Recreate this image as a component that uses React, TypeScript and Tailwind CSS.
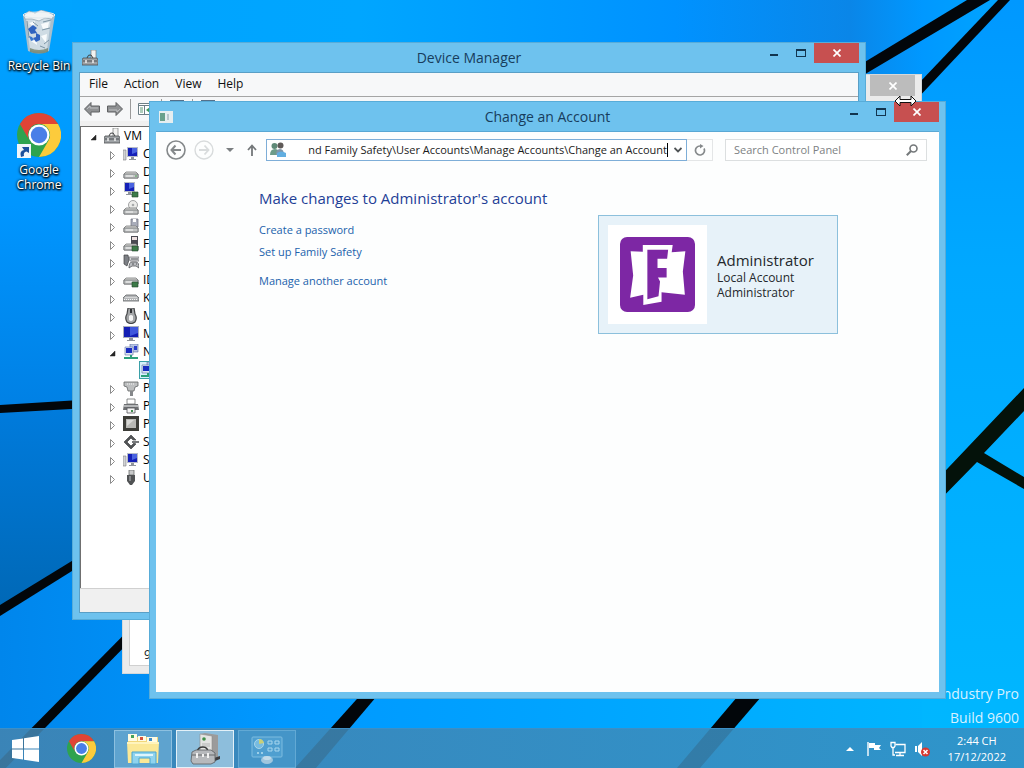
import { useState, type ReactNode } from "react";

/* ---------- wallpaper ---------- */

function Wallpaper() {
  return (
    <svg
      className="absolute inset-0 h-full w-full"
      viewBox="0 0 1024 768"
      preserveAspectRatio="xMidYMid slice"
      aria-hidden="true"
    >
      <defs>
        <linearGradient id="sky" x1="0" y1="0" x2="1" y2="0">
          <stop offset="0" stopColor="#00a2ff" />
          <stop offset="0.35" stopColor="#00a6ff" />
          <stop offset="0.66" stopColor="#0092ff" />
          <stop offset="0.83" stopColor="#0a86e8" />
          <stop offset="0.9" stopColor="#0098ff" />
          <stop offset="1" stopColor="#00a8ff" />
        </linearGradient>
        <linearGradient id="left" x1="0" y1="0" x2="0" y2="1">
          <stop offset="0" stopColor="#00a4ff" />
          <stop offset="0.5" stopColor="#0096ff" />
          <stop offset="1" stopColor="#0080e4" />
        </linearGradient>
        <linearGradient id="deep" x1="0" y1="0" x2="0" y2="1">
          <stop offset="0" stopColor="#007cde" />
          <stop offset="1" stopColor="#0068b6" />
        </linearGradient>
        <linearGradient id="floor" x1="0" y1="0" x2="1" y2="0">
          <stop offset="0" stopColor="#0086ec" />
          <stop offset="0.3" stopColor="#0098ff" />
          <stop offset="0.6" stopColor="#00a4ff" />
          <stop offset="1" stopColor="#00b6ff" />
        </linearGradient>
        <linearGradient id="right" x1="0" y1="0" x2="0" y2="1">
          <stop offset="0" stopColor="#0098ff" />
          <stop offset="0.35" stopColor="#00a8ff" />
          <stop offset="1" stopColor="#00b8ff" />
        </linearGradient>
      </defs>
      <path d="M0 0H1024V768H0Z" fill="url(#sky)" />
      <path d="M0 0H72V405L0 409Z" fill="url(#left)" />
      <path d="M0 409L160 400V512L0 610Z" fill="url(#deep)" />
      <path d="M0 610L160 512V480H945V768H0Z" fill="url(#floor)" />
      <path d="M922 88L1008 0H1024V768H922Z" fill="url(#right)" />
      <g fill="#02060a">
        <path d="M0 405L160 395V404L0 413Z" />
        <path d="M0 605L160 507V516L0 616Z" />
        <path d="M0 760L180 578V590L0 774Z" />
        <path d="M365 690L295 768H316L382 690Z" />
        <path d="M743 690L677 768H700L767 690Z" />
        <path d="M840 77L967 0H990L840 89Z" />
        <path d="M900 103L998 0H1010L900 117Z" />
      </g>
      <path d="M930 487L1024 388V411L984 453L1024 477V489L977 462L930 510Z" fill="#04120a" />
    </svg>
  );
}

/* ---------- large icons ---------- */

function ChromeLogo({ className }: { className: string }) {
  return (
    <svg className={className} viewBox="0 0 48 48" aria-hidden="true">
      <circle cx="24" cy="24" r="24" fill="#2ea34f" />
      <path d="M24 0A24 24 0 0 1 44.8 12H24A12 12 0 0 0 13.6 30L3.2 12A24 24 0 0 1 24 0Z" fill="#e04436" />
      <path d="M44.8 12A24 24 0 0 1 24 48L34.4 30A12 12 0 0 0 24 12Z" fill="#fccb3c" />
      <circle cx="24" cy="24" r="11.5" fill="#fff" />
      <circle cx="24" cy="24" r="9" fill="#4a7fe8" />
    </svg>
  );
}

function RecycleBinIcon() {
  return (
    <svg className="h-11 w-9" viewBox="0 0 36 44" aria-hidden="true">
      <path d="M2 5L7 41Q18 46 28 41L34 5Z" fill="#a9bfce" />
      <path d="M5 8L9 40Q18 43 26 40L30 8Z" fill="#cfdce4" />
      <path d="M3 5L8 1L14 3L20 0L27 2L33 5L31 9L24 8L18 11L11 9L4 9Z" fill="#f0f4f6" stroke="#8fa3b1" strokeWidth="0.7" />
      <path d="M8 13L14 11L13 17ZM20 14L28 12L27 18L22 19ZM10 31L15 27L16 35ZM20 26L26 24L25 33Z" fill="#f8fbfc" />
      <path d="M22 12L30 10M21 20L29 18M23 34L28 30M6 11L8 28M12 12L17 16M19 36L24 38" stroke="#7d96a6" fill="none" />
      <path d="M7 19L12 15L16 18L14 20L16 23L10 24Z" fill="#2f63c0" />
      <path d="M15 23L19 25L19 30L15 32L12 28L15 27Z" fill="#2f63c0" />
      <path d="M8 26L11 27L13 30L10 31Z" fill="#3a78cf" />
      <path d="M9 38Q18 42 27 38V42Q18 45 9 42Z" fill="#6c7d66" opacity="0.75" />
      <ellipse cx="18" cy="5" rx="16" ry="3" fill="none" stroke="#dfe9ef" />
    </svg>
  );
}

function FolderIcon() {
  return (
    <svg className="h-8 w-9" viewBox="0 0 36 32" aria-hidden="true">
      <path d="M3 4H33V30H3Z" fill="#f1d77a" />
      <path d="M3 1H12V8H3Z" fill="#fffbe4" />
      <path d="M6 2H9V5H6Z" fill="#46a35a" />
      <path d="M13 3H21V8H13Z" fill="#fffbe4" />
      <path d="M15 4H18V7H15Z" fill="#d5513c" />
      <path d="M22 4H32V9H22Z" fill="#fffbe4" />
      <path d="M24 5H27V8H24Z" fill="#3f8bc9" />
      <path d="M2 9H34L33 30H3Z" fill="#fbe896" />
      <path d="M2 9H34V11H2Z" fill="#fff4bd" />
      <path d="M7 19H31V31H25V25H14V31H7Z" fill="#8fd3ee" stroke="#4aa5d0" />
      <path d="M10 21H28V23H10Z" fill="#def5fd" />
    </svg>
  );
}

function DeviceToolboxIcon() {
  return (
    <svg className="h-8 w-8" viewBox="0 0 32 32" aria-hidden="true">
      <path d="M11 1L16 0L29 2V25L24 27L11 24Z" fill="#9b9b9b" />
      <path d="M11 1L23 3V26L11 24Z" fill="#e4e4e2" stroke="#8e8e8e" strokeWidth="0.6" />
      <circle cx="15" cy="6" r="1.8" fill="#3e8f48" />
      <path d="M13 11H21M13 13H21" stroke="#b5b5b5" />
      <path d="M25 25L31 23V26L26 28Z" fill="#3c3c40" />
      <path d="M8 19Q9 14 14 14T19 20" fill="none" stroke="#3a3a3a" strokeWidth="1.6" />
      <path d="M3 19L7 17H22L26 20V29L22 31H4L2 28Z" fill="#b7b9bc" stroke="#5b5d60" strokeWidth="0.8" />
      <path d="M3 22H26" stroke="#66686b" />
      <path d="M8 20V25M19 20V25M14 21V24" stroke="#f2f2f2" strokeWidth="2" />
    </svg>
  );
}

function ControlPanelIcon() {
  return (
    <svg className="h-8 w-8" viewBox="0 0 32 32" aria-hidden="true">
      <rect x="1" y="4" width="30" height="20" rx="1" fill="#4f9fd0" stroke="#7dbce0" />
      <circle cx="8" cy="11" r="4.5" fill="#77bbe0" stroke="#a8d6ec" />
      <path d="M8 11V6A5 5 0 0 1 13 10Z" fill="#c9cf78" />
      <path d="M17 8H21V11H17ZM24 8H28V11H24ZM17 15H21V18H17ZM24 15H28V18H24Z" fill="none" stroke="#a8d6ee" />
      <path d="M6 20H8M10 20H12" stroke="#9ccfe8" strokeWidth="2" />
      <ellipse cx="16" cy="27" rx="6" ry="4" fill="#9fc6de" />
      <ellipse cx="16" cy="25" rx="4" ry="2" fill="#c2dbea" />
    </svg>
  );
}

/* ---------- device tree icons, drawn on a 16 by 16 grid ---------- */

const screen = (
  <>
    <path d="M4 1H15V11H4Z" fill="#b8bcc8" />
    <path d="M5 2H14V10H5Z" fill="#1520b8" />
    <path d="M9 2H14V6L9 8Z" fill="#4a63e0" />
    <path d="M8 11H11V13H13V14H6V13H8Z" fill="#8f949c" />
  </>
);

const drive = (
  <>
    <path d="M3 8H13L15 10V14H1V10Z" fill="#dcdcda" stroke="#77797a" strokeWidth="0.8" />
    <path d="M1 10H15V14H1Z" fill="#c4c6c6" stroke="#6b6d6e" strokeWidth="0.8" />
    <path d="M3 12H10" stroke="#f4f4f4" />
  </>
);

const chip = <path d="M9 10H15V15H9Z" fill="#3c7a48" stroke="#24472b" strokeWidth="0.6" />;

const deviceGlyphs: Record<string, ReactNode> = {
  computer: (
    <>
      <path d="M0 4H3V14H0Z" fill="#d0d2d4" stroke="#7c7e80" strokeWidth="0.6" />
      {screen}
    </>
  ),
  disk: (
    <>
      {drive}
      <path d="M12 12H14" stroke="#4aa04f" />
    </>
  ),
  display: (
    <>
      <g transform="translate(-3 -1)">{screen}</g>
      {chip}
    </>
  ),
  dvd: (
    <>
      <circle cx="10" cy="5" r="4.5" fill="#ececea" stroke="#8b8d8e" strokeWidth="0.8" />
      <circle cx="10" cy="5" r="1.3" fill="#a8aaab" />
      {drive}
    </>
  ),
  floppy: (
    <>
      <path d="M8 1H15V9H8Z" fill="#a9adba" stroke="#6a6d78" strokeWidth="0.7" />
      <path d="M10 1H13V4H10Z" fill="#fff" />
      {drive}
    </>
  ),
  floppyController: (
    <>
      <path d="M8 0H15V9H8Z" fill="#4a4a52" />
      <path d="M9 1H14V4H9Z" fill="#eee1e1" />
      {drive}
      {chip}
    </>
  ),
  hid: (
    <>
      <path d="M1 1H5L6 6L4 12L1 10Z" fill="#7d8085" stroke="#3f4144" strokeWidth="0.7" />
      <path d="M6 3H16V7H7Z" fill="#d7d8da" stroke="#6d6f72" strokeWidth="0.7" />
      <path d="M6 14Q6 8 9 8H13Q16 8 16 14L13 12H9Z" fill="#b9bbbf" stroke="#55575a" strokeWidth="0.8" />
      <path d="M8 5H15M9 10H11M13 10H14" stroke="#55575a" />
    </>
  ),
  ide: (
    <>
      <g transform="translate(0 -2)">{drive}</g>
      {chip}
    </>
  ),
  keyboard: (
    <>
      <path d="M3 5H13L16 8V11H0V8Z" fill="#b4b6b8" stroke="#606264" strokeWidth="0.8" />
      <path d="M2.500 7.500H14M1 9.500H15" stroke="#f5f5f5" strokeDasharray="1 1" />
    </>
  ),
  mouse: (
    <>
      <path d="M5 0H11L12 6Q14.500 10 12 14Q8 17 4 14Q1.500 10 4 6Z" fill="#a4a6a8" stroke="#434547" strokeWidth="1.2" />
      <path d="M7 1H9V5H7Z" fill="#303234" />
      <path d="M6 8Q8 6 10 8V12Q8 14 6 12Z" fill="#f4f4f4" />
    </>
  ),
  monitor: (
    <>
      <path d="M0 0H16V12H0Z" fill="#a9aebd" />
      <path d="M1 1H15V11H1Z" fill="#141fb4" />
      <path d="M7 1H15V7L7 10Z" fill="#3f57dc" />
      <path d="M6 12H10V14H12V15H4V14H6Z" fill="#8f949c" />
    </>
  ),
  network: (
    <>
      <path d="M7 0H15V8H7Z" fill="#b7c4e4" stroke="#5a6ba0" strokeWidth="0.6" />
      <path d="M2 3H10V11H2Z" fill="#dfe6f4" stroke="#5a6ba0" strokeWidth="0.6" />
      <path d="M3 4H9V9H3Z" fill="#1a2cc0" />
      <path d="M11 2H14V6H11Z" fill="#2a3ccc" />
      <path d="M7 11H9V13H15V15H1V13H7Z" fill="#2da07a" />
    </>
  ),
  port: (
    <>
      <path d="M1 2H15V6L12 7L11 11H5L4 7L1 6Z" fill="#bcbebf" stroke="#626466" strokeWidth="0.8" />
      <path d="M7 11H10V16H7Z" fill="#85878a" />
      <path d="M4 4H12" stroke="#f5f5f5" strokeDasharray="1 1" />
    </>
  ),
  printer: (
    <>
      <path d="M4 1H12V6H4Z" fill="#fff" stroke="#6c6e70" strokeWidth="0.8" />
      <path d="M1 6H15L16 12H0Z" fill="#6d6f72" />
      <path d="M1 7H15V9H1Z" fill="#b4b6b8" />
      <path d="M4 10H12V15H4Z" fill="#f4f4f4" stroke="#55575a" strokeWidth="0.8" />
      <path d="M8 12H10V14H8Z" fill="#3f8b4c" />
    </>
  ),
  cpu: (
    <>
      <path d="M0 0H16V15H0Z" fill="#3d3d38" />
      <path d="M3 3H13V12H3Z" fill="#b8b8b4" />
      <path d="M4 4H11L4 10Z" fill="#d9d9d6" />
    </>
  ),
  storage: (
    <>
      <path d="M8 1L13 6L10 6L8 4L4 8L8 12L11 9L13 10L8 15L1 8Z" fill="#515355" stroke="#515355" strokeWidth="0.8" />
      <path d="M9 7H16V9H9Z" fill="#77797b" />
    </>
  ),
  usb: (
    <>
      <path d="M6 0H11V5H6Z" fill="#c9cacb" stroke="#6c6e70" strokeWidth="0.8" />
      <path d="M4 5H12V11L9 15H7L4 11Z" fill="#505254" />
      <path d="M6 6H8V11H6Z" fill="#85878a" />
    </>
  ),
  root: (
    <>
      <path d="M9 0H14V9H9Z" fill="#f2f2f0" stroke="#77797a" strokeWidth="0.7" />
      <path d="M5 8Q6 4 9 5L11 8" fill="none" stroke="#3c3e40" />
      <path d="M1 8H15L16 10V15H0V10Z" fill="#9fa3a6" stroke="#4b4f52" strokeWidth="0.8" />
      <path d="M1 11H15" stroke="#4b4f52" />
      <path d="M4 10V13M11 10V13" stroke="#eee" strokeWidth="1.5" />
    </>
  ),
};

function DeviceGlyph({ kind }: { kind: string }) {
  return (
    <svg className="h-4 w-4 shrink-0" viewBox="0 0 16 16" aria-hidden="true">
      {deviceGlyphs[kind]}
    </svg>
  );
}

function Twisty({ open }: { open: boolean }) {
  return (
    <svg className="h-3 w-3 shrink-0" viewBox="0 0 12 12" aria-hidden="true">
      {open ? (
        <path d="M8 5V10H3Z" fill="#262626" stroke="#262626" strokeWidth="0.5" />
      ) : (
        <path d="M3.500 3.500L7.500 7.500L3.500 11.500Z" fill="#fff" stroke="#8c8c8c" />
      )}
    </svg>
  );
}

/* ---------- window chrome ---------- */

function CloseGlyph() {
  return (
    <svg className="h-2 w-2" viewBox="0 0 8 8" aria-hidden="true">
      <path d="M0.5 0.5L7.5 7.5M7.5 0.5L0.5 7.5" stroke="#fff" strokeWidth="1.7" />
    </svg>
  );
}

function TitleBar({ title, icon }: { title: string; icon: ReactNode }) {
  return (
    <header className="grid h-[29px] shrink-0 grid-cols-[1fr_auto_1fr] items-center">
      <div className="pl-[9px]">{icon}</div>
      <h2 className="text-[14px] leading-5 font-normal text-[#173d5c]">{title}</h2>
      <div className="flex h-5 self-start justify-self-end pr-[6px]">
        <button type="button" aria-label="Minimize" className="flex w-[27px] items-center justify-center">
          <span className="mt-1 h-[2px] w-2 bg-[#12354f]" />
        </button>
        <button type="button" aria-label="Maximize" className="flex w-[27px] items-center justify-center">
          <span className="h-2 w-[10px] border border-t-2 border-[#12354f]" />
        </button>
        <button type="button" aria-label="Close" className="flex w-[45px] items-center justify-center bg-[#c75050]">
          <CloseGlyph />
        </button>
      </div>
    </header>
  );
}

/* ---------- device manager ---------- */

const devices = [
  { kind: "computer", name: "Computer" },
  { kind: "disk", name: "Disk drives" },
  { kind: "display", name: "Display" },
  { kind: "dvd", name: "DVD drives" },
  { kind: "floppy", name: "Floppy disks" },
  { kind: "floppyController", name: "Floppy drives" },
  { kind: "hid", name: "HID devices" },
  { kind: "ide", name: "IDE controllers" },
  { kind: "keyboard", name: "Keyboards" },
  { kind: "mouse", name: "Mice" },
  { kind: "monitor", name: "Monitors" },
  { kind: "network", name: "Network", open: true },
  { kind: "port", name: "Ports" },
  { kind: "printer", name: "Print queues" },
  { kind: "cpu", name: "Processors" },
  { kind: "storage", name: "Storage" },
  { kind: "computer", name: "System devices" },
  { kind: "usb", name: "USB controllers" },
];

function ToolArrow({ flip }: { flip?: boolean }) {
  return (
    <svg className={flip ? "h-4 w-4 rotate-180" : "h-4 w-4"} viewBox="0 0 16 16" aria-hidden="true">
      <path d="M0.5 8L7 1.5V5H15.5V11H7V14.5Z" fill="#8f9193" stroke="#5f6163" />
      <path d="M3 8L6 5V7H14" fill="none" stroke="#bcbec0" />
    </svg>
  );
}

function ToolPane() {
  return (
    <svg className="h-3 w-4" viewBox="0 0 16 12" aria-hidden="true">
      <path d="M0.5 0.5H15.5V11.5H0.5Z" fill="#fff" stroke="#6d7f86" />
      <path d="M0.5 2.5H15.5M6.5 3V11.5" stroke="#6d7f86" />
      <path d="M2 5H5M2 7H5M2 9H5" stroke="#5c9a77" />
      <path d="M8 7L12 4V10Z" fill="#3c9a58" />
    </svg>
  );
}

function ToolPage({ label }: { label: string }) {
  return (
    <button type="button" aria-label={label}>
      <svg className="h-[18px] w-4" viewBox="0 0 16 18" aria-hidden="true">
        <path d="M1 0H15V18H1Z" fill="#54708a" />
        <path d="M2 3H14V17H2Z" fill="#e8eef2" />
      </svg>
    </button>
  );
}

function DeviceManager() {
  return (
    <section
      aria-label="Device Manager"
      className="absolute top-[42px] left-[72px] flex h-[578px] w-[794px] flex-col border border-[#58acd8] bg-[#6ec2ee]"
    >
      <TitleBar title="Device Manager" icon={<DeviceGlyph kind="root" />} />
      <div className="mx-[6px] mb-[6px] flex min-h-0 flex-1 flex-col border border-[#5a9fc6] bg-[#f0f0f0]">
        <nav className="flex h-6 shrink-0 items-center gap-4 border-b border-[#a5a5a5] bg-[#f7f8f9] px-[9px] pb-px text-[12px] text-[#101010]">
          <button type="button">File</button>
          <button type="button">Action</button>
          <button type="button">View</button>
          <button type="button">Help</button>
        </nav>
        <div className="flex h-6 shrink-0 items-center gap-[7px] bg-[#f6f7f8] px-1">
          <button type="button" aria-label="Back">
            <ToolArrow />
          </button>
          <button type="button" aria-label="Forward">
            <ToolArrow flip />
          </button>
          <span className="h-5 w-px bg-[#9a9a9a]" />
          <button type="button" aria-label="Show console tree">
            <ToolPane />
          </button>
          <span className="h-5 w-px bg-[#9a9a9a]" />
          <ToolPage label="Properties" />
          <span className="h-5 w-px bg-[#9a9a9a]" />
          <ToolPage label="Help" />
        </div>
        <ul className="mt-[5px] flex-1 border-t border-l border-[#6f6f6f] bg-white pl-[7px] text-[12px] leading-[18px] text-black">
          <li>
            <div className="flex h-[18px] items-center gap-1">
              <Twisty open />
              <DeviceGlyph kind="root" />
              <span>VM</span>
            </div>
            <ul className="pl-[19px]">
              {devices.map((device) => (
                <li key={device.name}>
                  <div className="flex h-[18px] items-center gap-1">
                    <Twisty open={!!device.open} />
                    <DeviceGlyph kind={device.kind} />
                    <span className="whitespace-nowrap">{device.name}</span>
                  </div>
                  {device.open && (
                    <div className="ml-8 flex h-[18px] w-6 items-center border border-[#3aa0a8] bg-[#d8f0fb]">
                      <DeviceGlyph kind="network" />
                    </div>
                  )}
                </li>
              ))}
            </ul>
          </li>
        </ul>
        <footer className="h-6 shrink-0 border-t border-[#d0d0d0] bg-[#f0f0f0]" />
      </div>
    </section>
  );
}

/* ---------- change an account ---------- */

function AccountPicture() {
  return (
    <svg className="h-[75px] w-[75px]" viewBox="0 0 74 74" aria-hidden="true">
      <rect width="74" height="74" rx="7" fill="#7d27a4" />
      <path
        d="M10.5 14L22.5 14.5V8H52L51 15L64.5 14L62 34L64 57L41 54.5V64L23 67V57L10 60L13 38Z"
        fill="#fff"
      />
      <path d="M27 12.5H47.5L46.5 21.5H37V30.5H46V40H37.5L39.5 44L38 58.5L27 61.5Z" fill="#7d27a4" />
    </svg>
  );
}

function UsersIcon() {
  return (
    <svg className="h-4 w-4 shrink-0" viewBox="0 0 16 16" aria-hidden="true">
      <circle cx="4.500" cy="4" r="3" fill="#5f8a78" />
      <path d="M0 13Q0 7 5 7T9 13Z" fill="#6d9c8a" />
      <circle cx="10.500" cy="3.500" r="3" fill="#5f5a58" />
      <path d="M6 13Q6 7 10 7T14 13Z" fill="#7f96aa" />
      <path d="M7 11Q11 8 16 11V15H7Z" fill="#62aee0" />
    </svg>
  );
}

function AddressBar() {
  const [path, setPath] = useState(
    "nd Family Safety\\User Accounts\\Manage Accounts\\Change an Account",
  );
  return (
    <div className="flex h-9 shrink-0 items-center pr-3 pl-[10px]">
      <button type="button" aria-label="Back" className="mr-2 h-5 w-5">
        <svg viewBox="0 0 20 20" fill="none" stroke="#85898b" strokeWidth="1.6" aria-hidden="true">
          <circle cx="10" cy="10" r="9" />
          <path d="M15 10H6M9.500 5.500L5.500 10L9.500 14.500" strokeWidth="2" />
        </svg>
      </button>
      <button type="button" aria-label="Forward" className="mr-3 h-5 w-5">
        <svg viewBox="0 0 20 20" fill="none" stroke="#d9dcdd" strokeWidth="1.4" aria-hidden="true">
          <circle cx="10" cy="10" r="9" />
          <path d="M5 10H14M10.500 5.500L14.500 10L10.500 14.500" strokeWidth="1.800" />
        </svg>
      </button>
      <button type="button" aria-label="Recent locations" className="mr-3 flex h-5 w-2 items-center">
        <svg viewBox="0 0 8 4" className="h-1 w-2" aria-hidden="true">
          <path d="M0 0H8L4 4Z" fill="#7b7f81" />
        </svg>
      </button>
      <button type="button" aria-label="Up" className="mr-2 flex h-5 w-3 items-center">
        <svg viewBox="0 0 12 12" className="h-3 w-3" fill="none" stroke="#74787a" strokeWidth="1.8" aria-hidden="true">
          <path d="M6 12V2M2 6L6 1.500L10 6" />
        </svg>
      </button>
      <div className="flex h-[22px] min-w-0 flex-1 items-center border border-[#7eaed8] bg-white pr-1 pl-[3px]">
        <UsersIcon />
        <input
          aria-label="Address"
          value={path}
          onChange={(event) => setPath(event.target.value)}
          className="ml-1 min-w-0 flex-1 bg-transparent text-right text-[11px] text-[#1c1c1c] outline-none"
        />
        <span className="mr-[6px] h-[14px] w-px bg-black" />
        <button type="button" aria-label="Previous locations" className="flex w-2 items-center">
          <svg viewBox="0 0 8 6" className="h-[6px] w-2" fill="none" stroke="#4f5355" strokeWidth="1.8" aria-hidden="true">
            <path d="M0.500 1L4 4.500L7.500 1" />
          </svg>
        </button>
      </div>
      <button
        type="button"
        aria-label="Refresh"
        className="mr-3 flex h-[22px] w-[26px] items-center justify-center border border-l-0 border-[#e4e6e7]"
      >
        <svg viewBox="0 0 12 12" className="h-3 w-3" fill="none" stroke="#85898b" strokeWidth="1.7" aria-hidden="true">
          <path d="M10 4.500A4.500 4.500 0 1 1 6 2H7" />
          <path d="M6 0L9.500 2L6 4.500Z" fill="#85898b" stroke="none" />
        </svg>
      </button>
      <label className="flex h-[22px] w-[202px] items-center border border-[#dcdfe0] bg-white px-2">
        <input
          type="search"
          aria-label="Search Control Panel"
          placeholder="Search Control Panel"
          className="min-w-0 flex-1 bg-transparent text-[11px] text-[#333] outline-none placeholder:text-[#7d8183]"
        />
        <svg viewBox="0 0 12 12" className="h-3 w-3" fill="none" stroke="#74787a" aria-hidden="true">
          <circle cx="7.500" cy="4.500" r="3.500" strokeWidth="1.6" />
          <path d="M5 7L0.800 11.200" strokeWidth="2" />
        </svg>
      </label>
    </div>
  );
}

function ChangeAccount() {
  return (
    <section
      aria-label="Change an Account"
      className="absolute top-[101px] left-[149px] flex h-[598px] w-[797px] flex-col border border-[#58acd8] bg-[#6ec2ee]"
    >
      <TitleBar
        title="Change an Account"
        icon={
          <svg className="h-3 w-[14px]" viewBox="0 0 14 12" aria-hidden="true">
            <path d="M0 0H14V12H0Z" fill="#e6eef0" />
            <path d="M1 2H6V10H1Z" fill="#68a08c" />
            <path d="M8 3H10V9H8Z" fill="#b8c6cc" />
          </svg>
        }
      />
      <div className="mx-[6px] mb-[6px] min-h-0 flex-1 border-t border-[#5aa8d4] bg-[#fdfefe]">
        <AddressBar />
        <main className="flex justify-between pr-[101px] pl-[103px]">
          <div className="pt-[18px] text-[11px] leading-[22px]">
            <h1 className="text-[15px] leading-6 text-[#1f3f97]">Make changes to Administrator's account</h1>
            <ul className="mt-[9px] text-[#2262ac]">
              <li>
                <a href="#password">Create a password</a>
              </li>
              <li>
                <a href="#family">Set up Family Safety</a>
              </li>
              <li className="mt-[7px]">
                <a href="#manage">Manage another account</a>
              </li>
            </ul>
          </div>
          <div className="mt-[47px] flex h-[119px] w-[240px] items-center gap-[10px] border border-[#8cc0dc] bg-[#e7f2f9] px-[9px]">
            <div className="flex h-[99px] w-[99px] items-center justify-center bg-white">
              <AccountPicture />
            </div>
            <div className="text-[12px] leading-[15px] text-[#24282c]">
              <p className="text-[15px] leading-5">Administrator</p>
              <p>Local Account</p>
              <p>Administrator</p>
            </div>
          </div>
        </main>
      </div>
    </section>
  );
}

/* ---------- taskbar ---------- */

function Taskbar() {
  return (
    <footer className="relative flex h-10 shrink-0 items-center border-t border-[#3d8fc6] bg-linear-to-r from-[#4284b0]/88 to-[#3490c4]/88 text-white">
      <button type="button" aria-label="Start" className="mr-7 ml-3">
        <svg className="h-[26px] w-[27px]" viewBox="0 0 27 26" aria-hidden="true">
          <path
            d="M0 4L11 2.500V12.500H0ZM12 2.300L27 0V12.500H12ZM0 13.500H11V23.500L0 22ZM12 13.500H27V26L12 23.700Z"
            fill="#fff"
          />
        </svg>
      </button>
      <button type="button" aria-label="Google Chrome" className="mr-[18px]">
        <ChromeLogo className="h-[29px] w-[29px]" />
      </button>
      <div className="flex gap-1">
        <button
          type="button"
          aria-label="File Explorer"
          className="flex h-[38px] w-[58px] items-center justify-center border border-[#8cc0e0] bg-[#5ea3cf]"
        >
          <FolderIcon />
        </button>
        <button
          type="button"
          aria-label="Device Manager"
          className="flex h-[38px] w-[58px] items-center justify-center border border-[#e4f1f8] bg-[#8dbedc]"
        >
          <DeviceToolboxIcon />
        </button>
        <button
          type="button"
          aria-label="Control Panel"
          className="flex h-[38px] w-[58px] items-center justify-center border border-[#62a9d4] bg-[#4495c8]"
        >
          <ControlPanelIcon />
        </button>
      </div>
      <div className="ml-auto flex items-center gap-2 pr-[18px]">
        <button type="button" aria-label="Show hidden icons" className="mr-1">
          <svg className="h-1 w-2" viewBox="0 0 8 4" aria-hidden="true">
            <path d="M4 0L8 4H0Z" fill="#fff" />
          </svg>
        </button>
        <svg className="h-4 w-4" viewBox="0 0 16 16" aria-hidden="true">
          <path d="M2 1V15" stroke="#fff" strokeWidth="1.4" />
          <path d="M3 2H9V4H15L13 7L15 9H8V7H3Z" fill="#fff" />
        </svg>
        <svg className="h-4 w-4" viewBox="0 0 16 16" fill="none" stroke="#fff" aria-hidden="true">
          <path d="M5.500 3.500H15V11.500H5M10 12V14M6 14.500H14" strokeWidth="1.300" />
          <path d="M1 1.500H5V5L4 6.500H2L1 5ZM3 7V14H5" strokeWidth="1.300" />
        </svg>
        <svg className="h-4 w-4" viewBox="0 0 16 16" aria-hidden="true">
          <path d="M1 5H3V11H1ZM4 5L8 1V15L4 11Z" fill="#fff" />
          <circle cx="11.500" cy="11" r="4.500" fill="#d8372f" />
          <path d="M9.500 9L13.500 13M13.500 9L9.500 13" stroke="#fff" strokeWidth="1.500" />
        </svg>
        <time className="ml-[10px] text-center text-[11px] leading-4">
          2:44 CH
          <br />
          17/12/2022
        </time>
      </div>
    </footer>
  );
}

/* ---------- desktop ---------- */

export default function App() {
  return (
    <div className="relative flex min-h-screen flex-col overflow-hidden bg-[#0098f5] font-['Open_Sans','Noto_Sans',sans-serif]">
      <Wallpaper />
      <div className="relative flex-1">
        <div className="flex w-[78px] flex-col items-center pt-[10px] text-center text-[12px] leading-[15px] text-white [text-shadow:0_1px_2px_#000,1px_1px_2px_#000,0_0_3px_#000]">
          <a href="#recycle-bin" className="flex flex-col items-center gap-1 whitespace-nowrap">
            <RecycleBinIcon />
            Recycle Bin
          </a>
          <a href="#chrome" className="relative mt-10 flex flex-col items-center gap-[5px]">
            <ChromeLogo className="h-11 w-11" />
            <svg className="absolute top-[31px] left-0 h-[14px] w-[14px]" viewBox="0 0 14 14" aria-hidden="true">
              <path d="M0 0H14V14H0Z" fill="#f0f5fa" />
              <path d="M4 13Q2 7 7 6L5 3H12V9L9.500 7.500Q6 8 7 12Z" fill="#1b4f9c" />
            </svg>
            <span>
              Google
              <br />
              Chrome
            </span>
          </a>
        </div>

        <div className="absolute right-[5px] -bottom-0.5 text-right text-[14px] leading-6 text-[#d8f1ff]">
          <p>Windows 8.1 Industry Pro</p>
          <p>Build 9600</p>
        </div>

        <section
          aria-label="Background window"
          className="absolute top-[74px] left-[122px] flex h-[600px] w-[800px] flex-col border border-[#d4d8da] bg-[#ebebeb]"
        >
          <div className="flex h-[30px] shrink-0 justify-end pr-[6px]">
            <button type="button" aria-label="Close" className="flex h-[21px] w-[45px] items-center justify-center bg-[#bcbcbc]">
              <CloseGlyph />
            </button>
          </div>
          <div className="mx-[6px] mb-[7px] flex flex-1 flex-col justify-end border border-[#d0d0d0] bg-white pb-px pl-[14px] text-[12px] text-[#222]">
            <p>9 items</p>
          </div>
        </section>

        <DeviceManager />
        <ChangeAccount />

        <svg className="absolute top-[95px] left-[894px] h-3 w-[23px]" viewBox="0 0 23 12" aria-hidden="true">
          <path
            d="M1 6L6 1V4.500H17V1L22 6L17 11V7.500H6V11Z"
            fill="#fff"
            stroke="#111"
            strokeLinejoin="round"
          />
        </svg>
      </div>
      <Taskbar />
    </div>
  );
}
